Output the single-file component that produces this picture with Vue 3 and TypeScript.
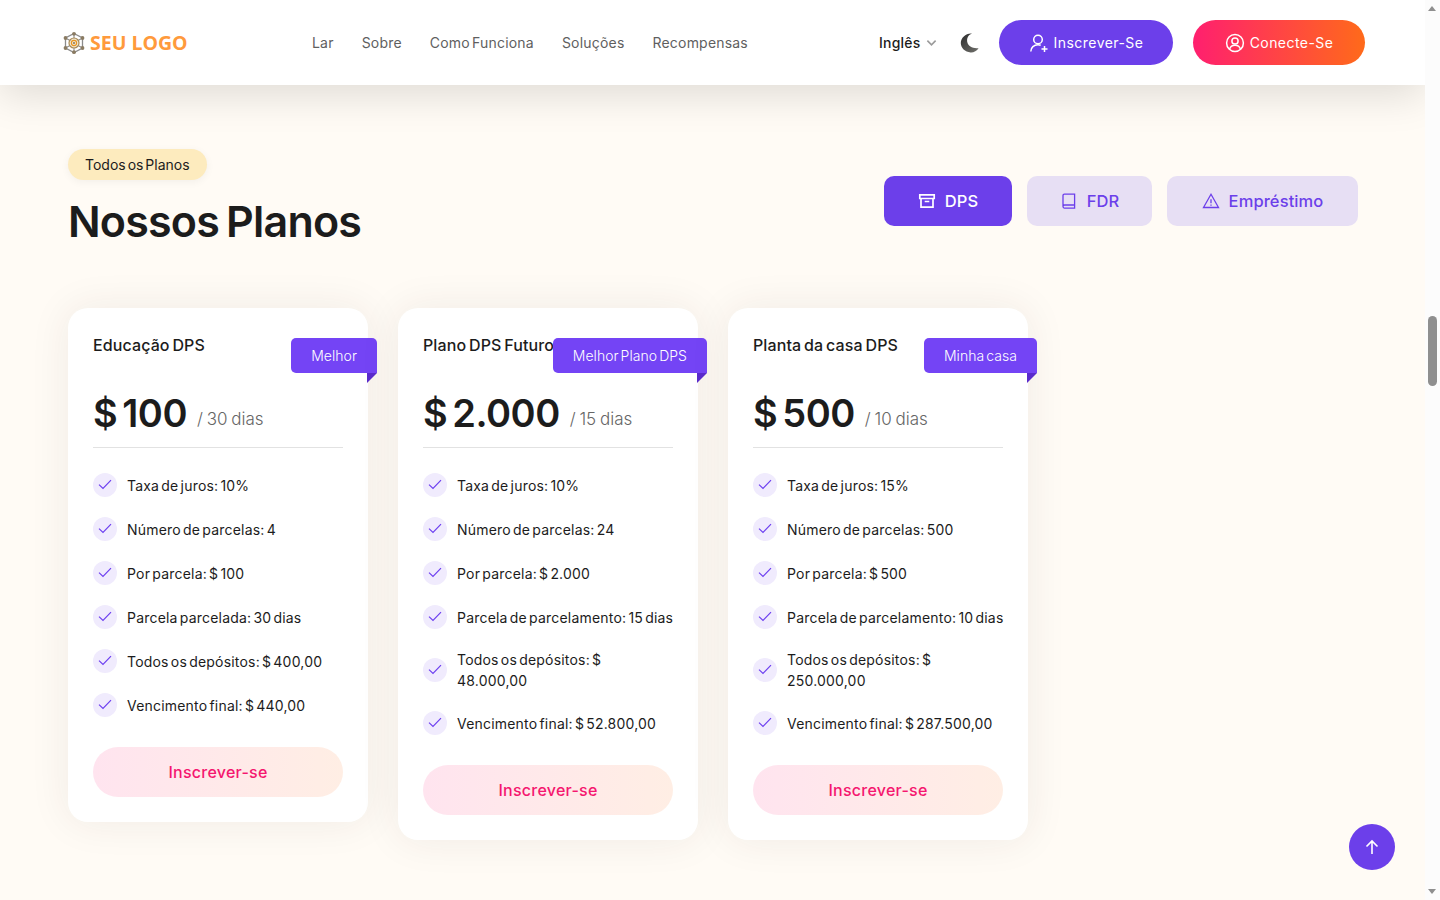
<script setup lang="ts">
interface Plan {
  title: string
  ribbon: string
  price: string
  period: string
  items: string[]
}

const navLinks: string[] = ['Lar', 'Sobre', 'Como Funciona', 'Soluções', 'Recompensas']

const plans: Plan[] = [
  {
    title: 'Educação DPS',
    ribbon: 'Melhor',
    price: '$ 100',
    period: '/ 30 dias',
    items: [
      'Taxa de juros: 10%',
      'Número de parcelas: 4',
      'Por parcela: $ 100',
      'Parcela parcelada: 30 dias',
      'Todos os depósitos: $ 400,00',
      'Vencimento final: $ 440,00'
    ]
  },
  {
    title: 'Plano DPS Futuro',
    ribbon: 'Melhor Plano DPS',
    price: '$ 2.000',
    period: '/ 15 dias',
    items: [
      'Taxa de juros: 10%',
      'Número de parcelas: 24',
      'Por parcela: $ 2.000',
      'Parcela de parcelamento: 15 dias',
      'Todos os depósitos: $\n48.000,00',
      'Vencimento final: $ 52.800,00'
    ]
  },
  {
    title: 'Planta da casa DPS',
    ribbon: 'Minha casa',
    price: '$ 500',
    period: '/ 10 dias',
    items: [
      'Taxa de juros: 15%',
      'Número de parcelas: 500',
      'Por parcela: $ 500',
      'Parcela de parcelamento: 10 dias',
      'Todos os depósitos: $\n250.000,00',
      'Vencimento final: $ 287.500,00'
    ]
  }
]
</script>

<template>
  <div class="shell">
    <div class="page">
      <header class="topbar">
        <a class="logo">
          <svg class="logo-mark" viewBox="0 0 24 24" width="24" height="24" fill="none">
            <path d="M12 2.500 20.500 7v10L12 21.500 3.500 17V7Z" stroke="#8c8c8c" stroke-width="1.300" />
            <path d="M12 2.500v5M12 16.500v5M3.500 7l4.500 2.500M20.500 7 16 9.500M3.500 17 8 14.500M20.500 17 16 14.500" stroke="#8c8c8c" stroke-width="1.100" />
            <circle cx="12" cy="12" r="5" fill="#efe4cf" stroke="#a98b55" stroke-width="1.200" />
            <circle cx="12" cy="12" r="2.600" stroke="#e8951f" stroke-width="1.100" />
            <circle cx="12" cy="12" r="0.900" fill="#7d6a48" />
            <circle cx="12" cy="2.800" r="1.900" fill="#8a7b62" />
            <circle cx="12" cy="21.200" r="1.900" fill="#8a7b62" />
            <circle cx="3.500" cy="7" r="1.900" fill="#8a7b62" />
            <circle cx="20.500" cy="7" r="1.900" fill="#8a7b62" />
            <circle cx="3.500" cy="17" r="1.900" fill="#8a7b62" />
            <circle cx="20.500" cy="17" r="1.900" fill="#8a7b62" />
          </svg>
          <span class="logo-text">SEU LOGO</span>
        </a>

        <nav class="nav">
          <a v-for="link in navLinks" :key="link" class="nav-link">{{ link }}</a>
        </nav>

        <div class="actions">
          <button class="lang" type="button">
            <span>Inglês</span>
            <svg viewBox="0 0 12 8" width="11" height="8" fill="none">
              <path d="M1.500 1.500 6 6l4.500-4.500" stroke="#9b9b9b" stroke-width="1.800" />
            </svg>
          </button>
          <svg class="moon" viewBox="0 0 20 20" width="20" height="20">
            <defs>
              <linearGradient id="moonFill" x1="0" y1="0" x2="0.800" y2="1">
                <stop offset="0" stop-color="#2c2c2c" />
                <stop offset="1" stop-color="#6a6a66" />
              </linearGradient>
            </defs>
            <path d="M12 .6C7.800 2.200 6.400 6 7.400 9.600c1 3.600 5 6.300 11.200 5.600-1.800 2.800-4.900 4.400-8 4.200C5 19.100 .8 15 .8 10 .8 4.800 6 0 12 .6Z" fill="url(#moonFill)" />
          </svg>
          <button class="cta cta-purple" type="button">
            <svg viewBox="0 0 20 20" width="20" height="20" fill="none" stroke="#fff" stroke-width="1.500">
              <circle cx="9" cy="6.500" r="4.300" />
              <path d="M1.800 18.500c0-4.200 3.200-6.700 7.200-6.700 1 0 1.900.1 2.700.4" />
              <path d="M15.500 13v6M12.500 16h6" />
            </svg>
            <span>Inscrever-Se</span>
          </button>
          <button class="cta cta-hot" type="button">
            <svg viewBox="0 0 20 20" width="20" height="20" fill="none" stroke="#fff" stroke-width="1.500">
              <circle cx="10" cy="10" r="8.400" />
              <circle cx="10" cy="8" r="3.100" />
              <path d="M4.600 16c.8-2.500 3-3.700 5.400-3.700s4.600 1.200 5.400 3.700" />
            </svg>
            <span>Conecte-Se</span>
          </button>
        </div>
      </header>

      <main class="content">
        <section class="head-row">
          <div class="head-copy">
            <span class="pill">Todos os Planos</span>
            <h1 class="heading">Nossos Planos</h1>
          </div>
          <div class="tabs">
            <button class="tab tab-active" type="button">
              <svg viewBox="0 0 18 18" width="18" height="18" fill="none" stroke="currentColor" stroke-width="1.700">
                <path d="M1.800 2.800h14.400v3.700H1.800zM3 6.500v8.700h12V6.500M6.700 9.500h4.600" />
              </svg>
              <span>DPS</span>
            </button>
            <button class="tab" type="button">
              <svg viewBox="0 0 18 18" width="18" height="18" fill="none" stroke="currentColor" stroke-width="1.300">
                <path d="M3 14.200V3.500c0-.8.600-1.400 1.400-1.400h10.200v14H4.500C3.700 16.100 3 15.400 3 14.500c0-.9.700-1.500 1.500-1.500h10.100" />
              </svg>
              <span>FDR</span>
            </button>
            <button class="tab" type="button">
              <svg viewBox="0 0 18 18" width="18" height="18" fill="none" stroke="currentColor" stroke-width="1.300">
                <path d="M9 2.300 16.500 15.500h-15ZM9 7.300v4M9 12.400v1.300" />
              </svg>
              <span>Empréstimo</span>
            </button>
          </div>
        </section>

        <section class="plans">
          <article v-for="plan in plans" :key="plan.title" class="card">
            <h2 class="card-title">{{ plan.title }}</h2>
            <div class="ribbon">{{ plan.ribbon }}</div>
            <div class="price-row">
              <span class="price">{{ plan.price }}</span>
              <span class="period">{{ plan.period }}</span>
            </div>
            <ul class="features">
              <li v-for="item in plan.items" :key="item" class="feature">
                <span class="tick">
                  <svg viewBox="0 0 14 14" width="14" height="14" fill="none">
                    <path d="M1 6.600 5 10.400 13 2.200" stroke="#6c3ff0" stroke-width="1.200" />
                  </svg>
                </span>
                <span class="feature-text">{{ item }}</span>
              </li>
            </ul>
            <button class="enroll" type="button">Inscrever-se</button>
          </article>
        </section>
      </main>
    </div>

    <aside class="scrollbar">
      <span class="arrow arrow-up"></span>
      <span class="thumb"></span>
      <span class="arrow arrow-down"></span>
    </aside>

    <button class="to-top" type="button">
      <svg viewBox="0 0 16 16" width="16" height="16" fill="none" stroke="#fff" stroke-width="1.600">
        <path d="M8 15V2M2.500 7.500 8 2l5.500 5.500" />
      </svg>
    </button>
  </div>
</template>

<style>
html,
body {
  margin: 0;
  height: 100%;
  overflow: hidden;
}
</style>

<style scoped>
.shell {
  display: flex;
  position: relative;
  height: 900px;
  overflow: hidden;
  font-family: Inter, "Liberation Sans", sans-serif;
  color: #1c1c1c;
}

.page {
  width: 1425px;
  flex: none;
  background: #fffbf5;
}

.topbar {
  display: flex;
  align-items: center;
  height: 85px;
  padding: 0 60px 0 62px;
  background: #fff;
  box-shadow: 0 10px 40px rgba(0, 0, 0, 0.13);
  position: relative;
}

.logo {
  display: flex;
  align-items: center;
  gap: 4px;
  width: 250px;
}

.logo-text {
  font-family: "Open Sans", sans-serif;
  font-size: 19.500px;
  font-weight: 700;
  color: #ff9a3c;
  white-space: nowrap;
}

.nav {
  display: flex;
  gap: 28px;
}

.nav-link {
  font-size: 14px;
  color: #5f5f5f;
  letter-spacing: 0.2px;
  word-spacing: -2px;
  white-space: nowrap;
}

.actions {
  display: flex;
  align-items: center;
  margin-left: auto;
}

.lang {
  display: flex;
  align-items: center;
  gap: 5.500px;
  border: 0;
  padding: 0;
  background: none;
  font: 500 14px Inter, sans-serif;
  color: #1c1c1c;
  letter-spacing: 0.2px;
}

.moon {
  margin-left: 23px;
}

.cta {
  display: flex;
  align-items: center;
  justify-content: center;
  gap: 5px;
  height: 45px;
  border: 0;
  border-radius: 23px;
  color: #fff;
  font: 400 14px Inter, sans-serif;
  letter-spacing: 0.45px;
}

.cta-purple {
  width: 174px;
  margin-left: 19px;
  background: #6c3fea;
}

.cta-hot {
  width: 172px;
  margin-left: 20px;
  background: linear-gradient(90deg, #ff1f6f, #ff6a1a);
}

.content {
  padding: 64px 67px 0 68px;
}

.head-row {
  display: flex;
  justify-content: space-between;
  align-items: flex-start;
}

.head-copy {
  display: flex;
  flex-direction: column;
  align-items: flex-start;
}

.pill {
  display: flex;
  align-items: center;
  height: 31px;
  padding: 0 17px;
  border-radius: 16px;
  background: #fdebbe;
  box-shadow: 0 2px 8px rgba(0, 0, 0, 0.05);
  font-size: 14px;
  word-spacing: -2px;
}

.heading {
  margin: 14px 0 0;
  font-size: 43px;
  line-height: 54px;
  font-weight: 600;
  letter-spacing: -0.8px;
  word-spacing: -3px;
}

.tabs {
  display: flex;
  gap: 15px;
  margin-top: 27px;
}

.tab {
  display: flex;
  align-items: center;
  justify-content: center;
  gap: 9px;
  height: 50px;
  padding: 0;
  border: 0;
  border-radius: 10px;
  background: #e7dff4;
  color: #6c3fea;
  font: 500 16.500px Inter, sans-serif;
  letter-spacing: 0.1px;
}

.tab:nth-child(1) {
  width: 128px;
}

.tab:nth-child(2) {
  width: 125px;
}

.tab:nth-child(3) {
  width: 191px;
}

.tab-active {
  background: #6c3fea;
  color: #fff;
}

.plans {
  display: flex;
  align-items: flex-start;
  gap: 30px;
  margin-top: 60px;
}

.card {
  position: relative;
  width: 300px;
  box-sizing: border-box;
  padding: 25px;
  background: #fff;
  border-radius: 20px;
  box-shadow: 0 0 40px rgba(60, 40, 40, 0.08);
}

.card-title {
  margin: 0;
  font-size: 16px;
  line-height: 24px;
  font-weight: 500;
  letter-spacing: 0.1px;
  word-spacing: -1.500px;
  white-space: nowrap;
}

.ribbon {
  position: absolute;
  top: 30px;
  right: -9px;
  height: 35px;
  padding: 0 20px;
  display: flex;
  align-items: center;
  background: #7444f5;
  border-radius: 5px 5px 0 5px;
  color: #fff;
  font-size: 14px;
  font-weight: 300;
  letter-spacing: 0.05px;
  word-spacing: -2px;
  white-space: nowrap;
}

.ribbon::after {
  content: "";
  position: absolute;
  right: 0;
  top: 100%;
  border-top: 10px solid #5a2bcc;
  border-right: 10px solid transparent;
}

.price-row {
  display: flex;
  align-items: flex-end;
  gap: 10px;
  margin-top: 28px;
  padding-bottom: 6px;
  border-bottom: 1px solid #e2e2e2;
}

.price {
  font-size: 38px;
  line-height: 56px;
  font-weight: 600;
  letter-spacing: -0.5px;
  word-spacing: -4px;
}

.period {
  font-size: 17px;
  line-height: 44px;
  font-weight: 300;
  color: #666;
  word-spacing: -1px;
}

.features {
  display: flex;
  flex-direction: column;
  gap: 20px;
  margin: 25px 0 0;
  padding: 0;
  list-style: none;
}

.feature {
  display: flex;
  align-items: center;
  gap: 10px;
}

.tick {
  display: flex;
  align-items: center;
  justify-content: center;
  flex: none;
  width: 24px;
  height: 24px;
  border-radius: 50%;
  background: #f0ebfd;
}

.feature-text {
  font-size: 14px;
  line-height: 21px;
  font-weight: 400;
  letter-spacing: 0.2px;
  word-spacing: -2px;
  white-space: pre;
}

.enroll {
  display: block;
  width: 100%;
  height: 50px;
  margin-top: 30px;
  border: 0;
  border-radius: 25px;
  background: linear-gradient(90deg, #ffe4ef, #ffeee4);
  color: #f5166f;
  font: 500 16px Inter, sans-serif;
  letter-spacing: 0.25px;
}

.scrollbar {
  position: relative;
  width: 15px;
  flex: none;
  background: #fcfcfc;
}

.arrow {
  position: absolute;
  left: 3px;
  border-left: 4.500px solid transparent;
  border-right: 4.500px solid transparent;
}

.arrow-up {
  top: 6px;
  border-bottom: 5px solid #8f8f8f;
}

.arrow-down {
  bottom: 6px;
  border-top: 5px solid #8f8f8f;
}

.thumb {
  position: absolute;
  top: 316px;
  left: 3px;
  width: 9px;
  height: 70px;
  border-radius: 5px;
  background: #8f8f8f;
}

.to-top {
  position: absolute;
  left: 1349px;
  top: 824px;
  width: 46px;
  height: 46px;
  display: flex;
  align-items: center;
  justify-content: center;
  padding: 0;
  border: 0;
  border-radius: 50%;
  background: #6c3fea;
}
</style>
